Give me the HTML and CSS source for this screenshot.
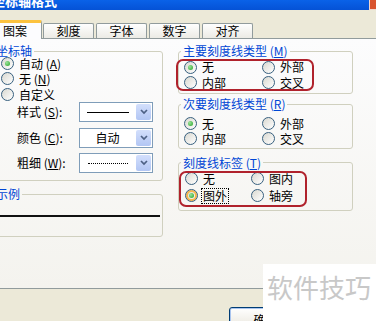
FILE: index.html
```html
<!DOCTYPE html>
<html lang="zh-CN">

<head>
  <meta charset="UTF-8" />
  <meta name="viewport" content="width=device-width, initial-scale=1.0" />
  <title>坐标轴格式</title>
  <link rel="stylesheet" href="styles.css">
</head>

<body>
  <div class="titlebar">
    <span class="title">坐标轴格式</span>
    <span class="close"></span>
  </div>

  <div class="tabs">
    <div class="tab active">图案</div>
    <div class="tab">刻度</div>
    <div class="tab">字体</div>
    <div class="tab">数字</div>
    <div class="tab">对齐</div>
  </div>

  <div class="pane">
    <div class="col-left">
      <fieldset class="group axis">
        <legend>坐标轴</legend>
        <div class="opts">
          <label class="opt"><span class="radio checked"></span>自动 (<u>A</u>)</label>
          <label class="opt"><span class="radio"></span>无 (<u>N</u>)</label>
          <label class="opt"><span class="radio"></span>自定义</label>
        </div>

        <div class="field">
          <span class="field-label">样式 (<u>S</u>):</span>
          <div class="combo">
            <span class="combo-value"><span class="line-solid"></span></span>
            <span class="combo-btn"><svg width="8" height="6" viewBox="0 0 8 6"><polyline points="1,1 4,4 7,1" /></svg></span>
          </div>
        </div>
        <div class="field">
          <span class="field-label">颜色 (<u>C</u>):</span>
          <div class="combo">
            <span class="combo-value">自动</span>
            <span class="combo-btn"><svg width="8" height="6" viewBox="0 0 8 6"><polyline points="1,1 4,4 7,1" /></svg></span>
          </div>
        </div>
        <div class="field">
          <span class="field-label">粗细 (<u>W</u>):</span>
          <div class="combo">
            <span class="combo-value"><span class="line-dotted"></span></span>
            <span class="combo-btn"><svg width="8" height="6" viewBox="0 0 8 6"><polyline points="1,1 4,4 7,1" /></svg></span>
          </div>
        </div>
      </fieldset>

      <fieldset class="group sample">
        <legend>示例</legend>
        <div class="sample-line"></div>
      </fieldset>
    </div>

    <div class="col-right">
      <fieldset class="group major">
        <legend>主要刻度线类型 (<u>M</u>)</legend>
        <div class="grid">
          <label class="opt"><span class="radio checked"></span>无</label>
          <label class="opt"><span class="radio"></span>外部</label>
          <label class="opt"><span class="radio"></span>内部</label>
          <label class="opt"><span class="radio"></span>交叉</label>
          <span class="mark"></span>
        </div>
      </fieldset>

      <fieldset class="group minor">
        <legend>次要刻度线类型 (<u>R</u>)</legend>
        <div class="grid">
          <label class="opt"><span class="radio checked"></span>无</label>
          <label class="opt"><span class="radio"></span>外部</label>
          <label class="opt"><span class="radio"></span>内部</label>
          <label class="opt"><span class="radio"></span>交叉</label>
        </div>
      </fieldset>

      <fieldset class="group labels">
        <legend>刻度线标签 (<u>T</u>)</legend>
        <div class="grid">
          <label class="opt"><span class="radio"></span>无</label>
          <label class="opt"><span class="radio"></span>图内</label>
          <label class="opt"><span class="radio checked hot"></span><span class="focus">图外</span></label>
          <label class="opt"><span class="radio"></span>轴旁</label>
          <span class="mark"></span>
        </div>
      </fieldset>
    </div>
  </div>

  <div class="footer">
    <button class="btn">确定</button>
  </div>

  <div class="watermark">软件技巧</div>
</body>

</html>
```

FILE: styles.css
```css
html,
body {
  margin: 0;
  width: 376px;
  height: 321px;
  overflow: hidden;
}

body {
  font-family: "Noto Sans CJK SC", "Liberation Sans", sans-serif;
  font-size: 12px;
  color: #000;
  background-color: #ece9d8;
}

u {
  text-decoration: underline;
}

/* title bar, only its lower edge is in the picture */
.titlebar {
  height: 10px;
  display: flex;
  justify-content: space-between;
  overflow: hidden;
  background: linear-gradient(#0a62e8, #0552d6);
}

.title {
  margin: -6px 0 0 -8px;
  font-size: 13px;
  font-weight: bold;
  line-height: 13px;
  color: white;
}

.close {
  width: 6px;
  height: 9px;
  border-left: 1px solid #f3d6cc;
  border-bottom: 1px solid #f3d6cc;
  background-color: #d8532e;
}

/* tabs */
.tabs {
  height: 28px;
  display: flex;
  align-items: flex-end;
  margin-left: -12px;
}

.tab {
  box-sizing: border-box;
  width: 51px;
  height: 15px;
  margin-left: 2px;
  border: 1px solid #919b9c;
  border-bottom: none;
  border-radius: 2px 2px 0 0;
  background: linear-gradient(#fefefe, #ecebe5);
  text-align: center;
  line-height: 14px;
}

.tab.active {
  position: relative;
  z-index: 1;
  width: 54px;
  height: 19px;
  margin-left: 0;
  margin-bottom: -1px;
  margin-right: -1px;
  border-top: 3px solid #fcc23e;
  background: #fcfcfe;
  line-height: 15px;
}

/* tab body */
.pane {
  box-sizing: border-box;
  height: 251px;
  padding-top: 5px;
  display: flex;
  border-top: 1px solid #919b9c;
  border-bottom: 1px solid #919b9c;
  background: linear-gradient(#fcfcfd, #f4f3ee);
}

.col-left {
  width: 173px;
  margin-left: -10px;
  flex-shrink: 0;
}

.col-right {
  width: 175px;
  margin-left: 15px;
  flex-shrink: 0;
}

fieldset.group {
  margin: 0;
  min-width: 0;
  padding: 0 0 0 2px;
  border: 1px solid #d0d0bf;
  border-radius: 3px;
}

fieldset.group legend {
  padding: 0 2px;
  color: #0046d5;
  line-height: 14px;
}

/* radio buttons */
.opt {
  display: flex;
  align-items: center;
  white-space: nowrap;
  line-height: 15px;
}

.radio {
  box-sizing: border-box;
  width: 13px;
  height: 13px;
  margin-right: 5px;
  flex-shrink: 0;
  border: 1px solid #38607f;
  border-radius: 50%;
  background: linear-gradient(135deg, #d9d8d0, #ffffff);
  display: flex;
  align-items: center;
  justify-content: center;
}

.radio.checked::after {
  content: "";
  width: 5px;
  height: 5px;
  border-radius: 50%;
  background: radial-gradient(circle at 35% 35%, #9be39b, #24a324);
}

.radio.hot {
  box-shadow: inset 0 0 0 2px #f6b64b;
}

.focus {
  line-height: 12px;
  outline: 1px dotted #000;
  outline-offset: 1px;
}

/* axis group */
.axis {
  padding-left: 3px !important;
  padding-bottom: 7px !important;
}

fieldset.axis legend {
  padding: 2px 2px;
  line-height: 10px;
}

.axis .opts {
  margin-top: -2.5px;
}

.axis .opt {
  height: 15.5px;
  line-height: 15.5px;
  margin-left: 7px;
}

.field {
  height: 20px;
  display: flex;
  align-items: center;
  margin-left: 23px;
  line-height: 16px;
}

.field + .field {
  margin-top: 5.5px;
}

.field-label {
  width: 62px;
  white-space: nowrap;
}

.combo {
  box-sizing: border-box;
  width: 74px;
  height: 20px;
  display: flex;
  border: 1px solid #7f9db9;
  background-color: white;
}

.combo-value {
  flex: 1;
  display: flex;
  align-items: center;
  justify-content: center;
}

.combo-btn {
  width: 15px;
  margin: 1px;
  border-radius: 2px;
  background: linear-gradient(#d3dffc, #b2c6f4);
  display: flex;
  align-items: center;
  justify-content: center;
}

.combo-btn svg polyline {
  fill: none;
  stroke: #4d6185;
  stroke-width: 1.7;
}

.line-solid {
  width: 42px;
  height: 1px;
  background-color: #000;
}

.line-dotted {
  width: 40px;
  border-top: 1px dotted #000;
}

/* sample group */
.sample {
  margin-top: 6px !important;
  padding-left: 3px !important;
  padding-bottom: 19px !important;
}

.sample-line {
  height: 2px;
  margin: 14px 2px 0 6px;
  background-color: #111;
}

/* tick groups on the right */
.grid {
  position: relative;
  display: grid;
  grid-template-columns: 78px 78px;
  padding-left: 3px;
}

.major .grid,
.minor .grid {
  grid-auto-rows: 15.5px;
}

.major .opt,
.minor .opt {
  line-height: 15.5px;
}

.major .grid {
  margin-top: 1.25px;
}

.major {
  padding-bottom: 2.5px !important;
}

.minor {
  margin-top: 3.5px !important;
  padding-bottom: 1.5px !important;
}

.minor .grid {
  margin-top: 4.25px;
}

.labels {
  margin-top: 6.5px !important;
  padding-bottom: 6px !important;
}

.labels .grid {
  margin-top: 0.5px;
  grid-auto-rows: 17px;
  grid-template-columns: 66px 66px;
  padding-left: 4px;
}

/* red annotation boxes drawn over the screenshot */
.mark {
  position: absolute;
  box-sizing: border-box;
  border: 2px solid #b0222c;
  border-radius: 7px;
}

.major .mark {
  left: -5px;
  top: -0.25px;
  width: 138px;
  height: 32px;
}

.labels .mark {
  left: -2px;
  top: 0.5px;
  width: 128px;
  height: 36px;
}

/* bottom strip */
.footer {
  padding: 18px 0 0 229px;
}

.btn {
  width: 73px;
  height: 23px;
  padding: 2px 0 0;
  border: 1px solid #003c74;
  border-radius: 3px;
  background: linear-gradient(#ffffff, #ece9e0 85%, #d6d0c5);
  box-shadow: inset 0 0 0 1px #a9c4ee;
  font-family: "Noto Sans CJK SC", sans-serif;
  font-size: 12px;
  line-height: 14px;
  color: #000;
  vertical-align: top;
}

.watermark {
  position: absolute;
  right: 0;
  bottom: 0;
  box-sizing: border-box;
  width: 113px;
  height: 57px;
  padding: 8px 0 0 4px;
  background-color: white;
  color: #c8c8c8;
  font-size: 26px;
  line-height: 30px;
  white-space: nowrap;
}
```
